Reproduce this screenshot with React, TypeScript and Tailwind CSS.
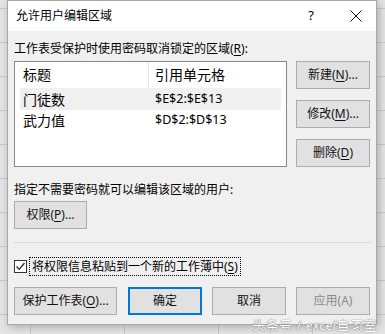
import React from "react";

const F = { fontFamily: '"Noto Sans", "Noto Sans CJK SC", sans-serif' };

function Btn({ children, className = "", def = false, disabled = false }: { children: React.ReactNode; className?: string; def?: boolean; disabled?: boolean }) {
  return (
    <div
      className={
        "h-[28px] flex items-center justify-center text-[12px] bg-[#e1e1e1] " +
        (def ? "border-2 border-[#0078d7] " : "border border-[#adadad] ") +
        (disabled ? "text-[#8a8a8a] " : "text-[#111] ") +
        className
      }
    >
      {children}
    </div>
  );
}

const U = ({ c }: { c: string }) => <span className="underline underline-offset-2">{c}</span>;

export default function App() {
  const hLines = [8, 42, 76, 110, 144, 178, 212, 246, 280, 314];
  const vLines = [30, 124, 218, 312];
  return (
    <div className="relative w-[385px] h-[334px] overflow-hidden bg-[#e4e4e4]" style={F}>
      {hLines.map((y) => (
        <div key={"h" + y} className="absolute left-0 right-0 h-px bg-[#c8c8c8]" style={{ top: y }} />
      ))}
      {vLines.map((x) => (
        <div key={"v" + x} className="absolute top-0 bottom-0 w-px bg-[#c8c8c8]" style={{ left: x }} />
      ))}

      {/* dialog */}
      <div className="absolute left-[7px] top-0 w-[370px] h-[325px] border border-[#a8a8a8] bg-[#f0f0f0] shadow-[2px_2px_8px_rgba(0,0,0,0.25)] flex flex-col">
        <div className="h-[30px] bg-white flex items-center shrink-0">
          <span className="pl-[8px] text-[12px] text-black">允许用户编辑区域</span>
          <span className="ml-auto mr-[36px] text-[13px] text-black">?</span>
          <svg width="12" height="12" viewBox="0 0 12 12" className="mr-[14px]">
            <path d="M0.5 0.5 L11.5 11.5 M11.5 0.5 L0.5 11.5" stroke="#111" strokeWidth="1" />
          </svg>
        </div>
        <div className="flex flex-col px-[6px] pb-[10px] flex-1">
          <div className="mt-[10px] h-[16px] leading-[16px] text-[12px] text-black">
            工作表受保护时使用密码取消锁定的区域(<U c="R" />):
          </div>
          <div className="mt-[4px] flex">
            <div className="w-[273px] h-[106px] bg-white border border-[#828790] flex flex-col">
              <div className="flex h-[25px] items-center text-[14px] text-black">
                <div className="w-[134px] pl-[8px] h-full flex items-center border-r border-[#e5e5e5]">标题</div>
                <div className="pl-[6px]">引用单元格</div>
              </div>
              <div className="mt-[1px] mx-[5px] flex h-[22px] items-center bg-[#f0f0f0]">
                <div className="w-[129px] pl-[3px] text-[14px] text-black">门徒数</div>
                <div className="pl-[6px] text-[12.5px] text-black">$E$2:$E$13</div>
              </div>
              <div className="mx-[5px] flex h-[21px] items-center">
                <div className="w-[129px] pl-[3px] text-[14px] text-black">武力值</div>
                <div className="pl-[6px] text-[12.5px] text-black">$D$2:$D$13</div>
              </div>
            </div>
            <div className="ml-[9px] flex flex-col gap-[11px]">
              <Btn className="w-[74px]">新建(<U c="N" />)...</Btn>
              <Btn className="w-[74px]">修改(<U c="M" />)...</Btn>
              <Btn className="w-[74px]">删除(<U c="D" />)</Btn>
            </div>
          </div>
          <div className="mt-[15px] h-[16px] leading-[16px] text-[12px] text-black">指定不需要密码就可以编辑该区域的用户:</div>
          <Btn className="mt-[3px] w-[73px]">权限(<U c="P" />)...</Btn>
          <div className="mt-[13px] h-px bg-[#dadada] mr-[-1px]" />
          <div className="mt-[14px] flex items-center h-[19px]">
            <div className="w-[13px] h-[13px] border border-[#333] bg-white flex items-center justify-center">
              <svg width="11" height="11" viewBox="0 0 11 11">
                <path d="M1.5 5.5 L4.2 8.3 L9.5 2" fill="none" stroke="#222" strokeWidth="1.2" />
              </svg>
            </div>
            <div className="ml-[2px] h-[19px] px-[2px] flex items-center border border-dotted border-black text-[12px] text-black">
              将权限信息粘贴到一个新的工作薄中(<U c="S" />)
            </div>
          </div>
          <div className="mt-[11px] flex">
            <Btn className="w-[103px]">保护工作表(<U c="O" />)...</Btn>
            <Btn def className="ml-[11px] w-[74px]">确定</Btn>
            <Btn className="ml-[10px] w-[74px]">取消</Btn>
            <Btn disabled className="ml-[10px] w-[74px]">应用(A)</Btn>
          </div>
        </div>
      </div>

      <div
        className="absolute text-[13px] leading-[16px] text-white tracking-[0.5px] [text-shadow:0_0_1px_#777,0_0_1px_#777]"
        style={{ right: 8, bottom: 1 }}
      >
        头条号 / <span className="italic">excel</span>自习室
      </div>
    </div>
  );
}
